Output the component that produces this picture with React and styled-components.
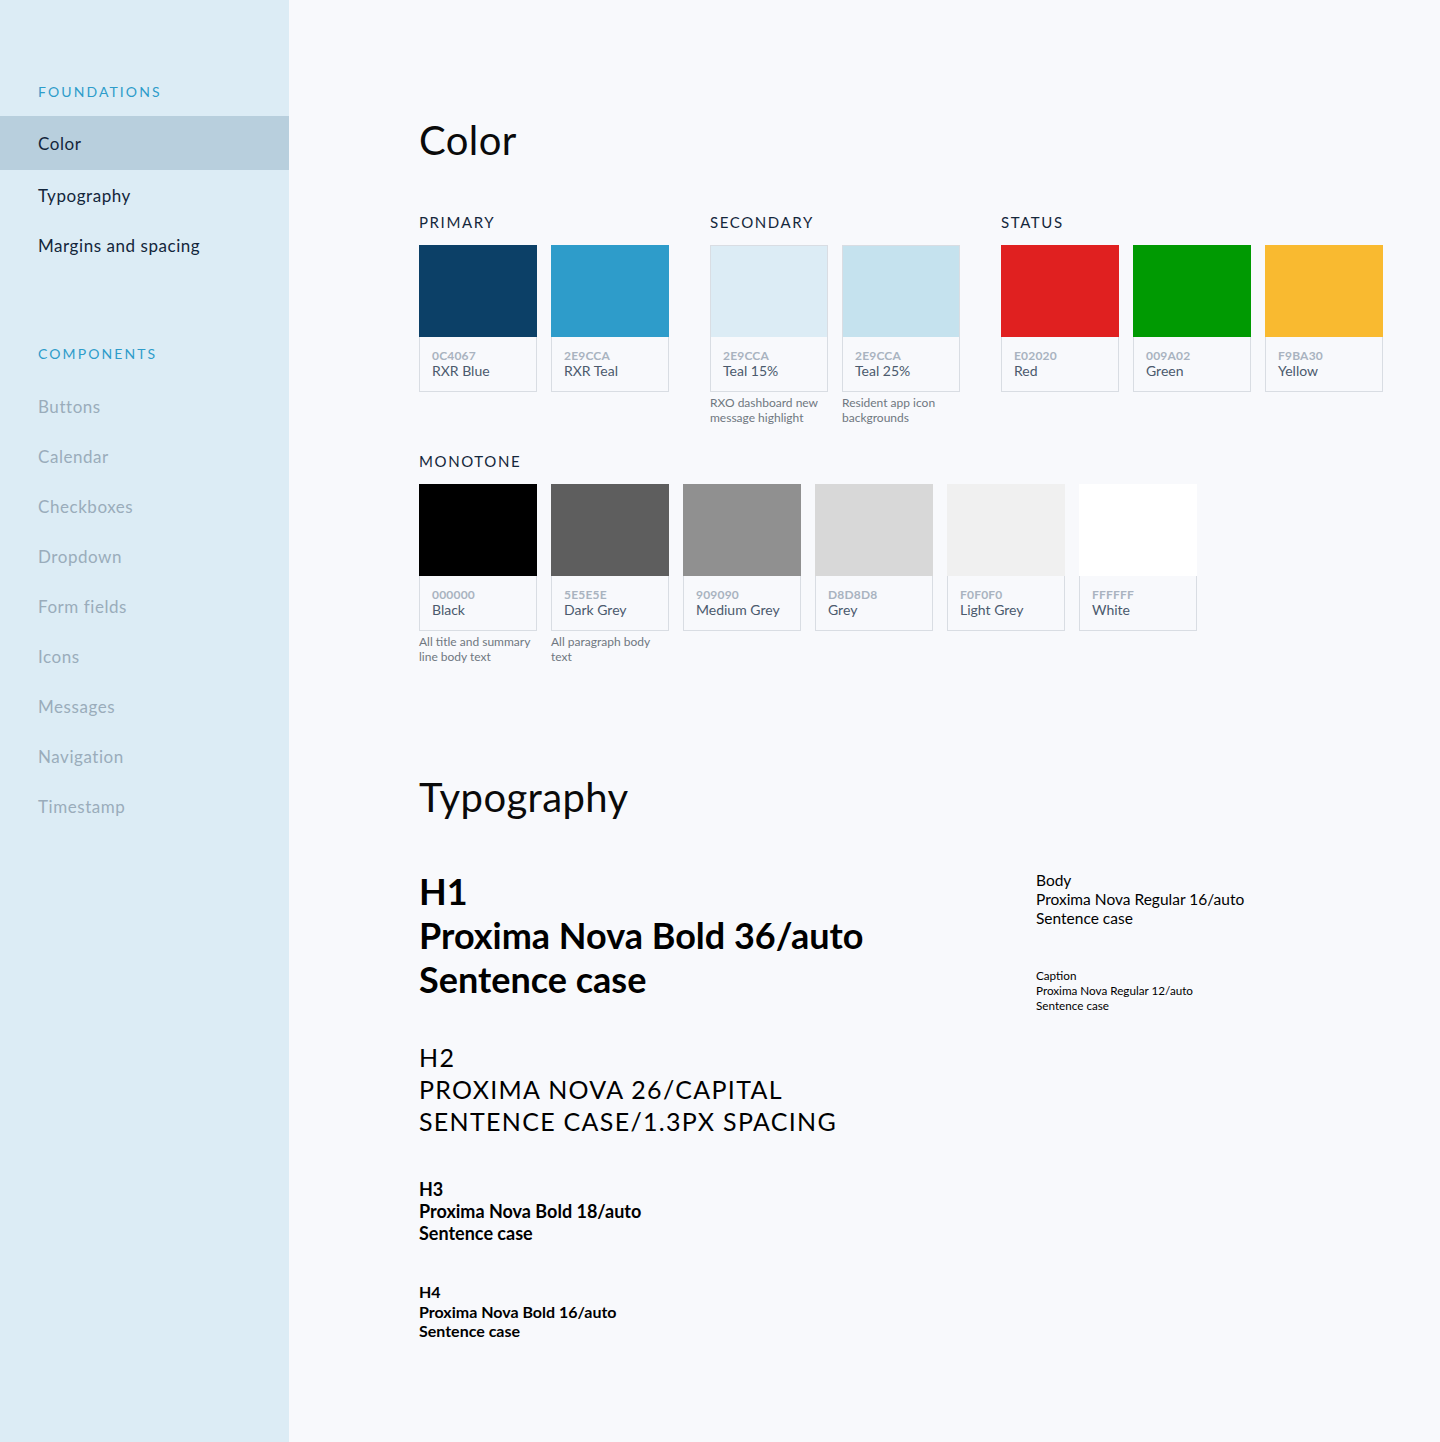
import React from "react";
import styled, { createGlobalStyle } from "styled-components";

const Global = createGlobalStyle`
  html, body { margin: 0; padding: 0; }
  body {
    background: #f8f9fc;
    font-family: Lato, "Open Sans", Arial, sans-serif;
    -webkit-font-smoothing: antialiased;
  }
  * { box-sizing: border-box; }
`;

const Layout = styled.div`
  display: flex;
  min-height: 1442px;
`;

const Sidebar = styled.nav`
  width: 289px;
  flex-shrink: 0;
  background: #dcecf5;
  padding-top: 83px;
`;

const NavLabel = styled.div`
  padding-left: 38px;
  font-size: 14px;
  line-height: 17px;
  letter-spacing: 2.1px;
  color: #2e9cca;
  text-transform: uppercase;
  margin-top: ${(p) => p.$mt || 0}px;
`;

const NavList = styled.ul`
  list-style: none;
  margin: ${(p) => p.$mt}px 0 0;
  padding: 0;
`;

const NavItem = styled.li`
  display: flex;
  align-items: center;
  height: ${(p) => (p.$active ? 54 : 50)}px;
  padding-left: 38px;
  font-size: 17px;
  letter-spacing: 0.55px;
  color: ${(p) => (p.$muted ? "#9aacbb" : "#13263b")};
  background: ${(p) => (p.$active ? "#b8cfdd" : "transparent")};
`;

const Main = styled.main`
  flex: 1;
  padding: 116px 0 80px 130px;
  color: #000;
`;

const PageTitle = styled.h1`
  margin: ${(p) => p.$mt || 0}px 0 0;
  font-size: 40px;
  line-height: 48px;
  font-weight: 400;
  letter-spacing: 0.4px;
  color: #0a0a0a;
`;

const GroupRow = styled.div`
  display: flex;
  gap: 41px;
  margin-top: ${(p) => p.$mt || 0}px;
`;

const Group = styled.section`
  display: flex;
  flex-direction: column;
`;

const GroupLabel = styled.h3`
  margin: 0 0 14px;
  font-size: 15px;
  line-height: 18px;
  font-weight: 400;
  letter-spacing: 1.6px;
  color: #14273b;
  text-transform: uppercase;
`;

const Swatches = styled.div`
  display: flex;
  gap: 14px;
`;

const SwatchCol = styled.div`
  width: 118px;
  display: flex;
  flex-direction: column;
`;

const Swatch = styled.div`
  border: 1px solid #d9dde3;
  display: flex;
  flex-direction: column;
`;

const Chip = styled.div`
  height: 92px;
  margin: -1px -1px 0;
  background: ${(p) => p.$color};
  border: ${(p) => (p.$light ? "1px solid #d9dde3" : "none")};
  border-bottom: none;
`;

const SwatchInfo = styled.div`
  padding: 12px 12px 12px;
`;

const Hex = styled.div`
  font-size: 12px;
  line-height: 14px;
  font-weight: 700;
  letter-spacing: 0.2px;
  color: #a9b3c0;
`;

const Name = styled.div`
  font-size: 14px;
  line-height: 16px;
  color: #4b5a6d;
`;

const Caption = styled.div`
  margin-top: 3px;
  font-size: 12px;
  line-height: 15px;
  color: #6f7780;
`;

const TypeGrid = styled.div`
  display: grid;
  grid-template-columns: 617px 1fr;
  margin-top: 48px;
`;

const Column = styled.div`
  display: flex;
  flex-direction: column;
  padding-top: ${(p) => p.$pt || 0}px;
`;

const Spec = styled.div`
  margin-top: ${(p) => p.$mt || 0}px;
  font-size: ${(p) => p.$size}px;
  line-height: ${(p) => p.$lh}px;
  font-weight: ${(p) => (p.$bold ? 700 : 400)};
  letter-spacing: ${(p) => p.$ls || 0}px;
  text-transform: ${(p) => (p.$upper ? "uppercase" : "none")};
  color: #000;
`;

const foundations = [
  { label: "Color", active: true },
  { label: "Typography" },
  { label: "Margins and spacing" },
];

const components = [
  "Buttons",
  "Calendar",
  "Checkboxes",
  "Dropdown",
  "Form fields",
  "Icons",
  "Messages",
  "Navigation",
  "Timestamp",
];

const colorGroups = [
  {
    label: "Primary",
    swatches: [
      { hex: "0C4067", name: "RXR Blue", color: "#0c4067" },
      { hex: "2E9CCA", name: "RXR Teal", color: "#2e9cca" },
    ],
  },
  {
    label: "Secondary",
    swatches: [
      {
        hex: "2E9CCA",
        name: "Teal 15%",
        color: "#dcecf5",
        light: true,
        caption: ["RXO dashboard new", "message highlight"],
      },
      {
        hex: "2E9CCA",
        name: "Teal 25%",
        color: "#c5e2ee",
        light: true,
        caption: ["Resident app icon", "backgrounds"],
      },
    ],
  },
  {
    label: "Status",
    swatches: [
      { hex: "E02020", name: "Red", color: "#e02020" },
      { hex: "009A02", name: "Green", color: "#009a02" },
      { hex: "F9BA30", name: "Yellow", color: "#f9ba30" },
    ],
  },
];

const monotone = [
  { hex: "000000", name: "Black", color: "#000000", caption: ["All title and summary", "line body text"] },
  { hex: "5E5E5E", name: "Dark Grey", color: "#5e5e5e", caption: ["All paragraph body", "text"] },
  { hex: "909090", name: "Medium Grey", color: "#909090" },
  { hex: "D8D8D8", name: "Grey", color: "#d8d8d8" },
  { hex: "F0F0F0", name: "Light Grey", color: "#f0f0f0" },
  { hex: "FFFFFF", name: "White", color: "#ffffff" },
];

function SwatchCard({ s }) {
  return (
    <SwatchCol>
      <Swatch>
        <Chip $color={s.color} $light={s.light} />
        <SwatchInfo>
          <Hex>{s.hex}</Hex>
          <Name>{s.name}</Name>
        </SwatchInfo>
      </Swatch>
      {s.caption && (
        <Caption>
          {s.caption[0]}
          <br />
          {s.caption[1]}
        </Caption>
      )}
    </SwatchCol>
  );
}

function Lines({ lines, ...props }) {
  return (
    <Spec {...props}>
      {lines.map((l, i) => (
        <div key={i}>{l}</div>
      ))}
    </Spec>
  );
}

export default function App() {
  return (
    <>
      <Global />
      <Layout>
        <Sidebar>
          <NavLabel>Foundations</NavLabel>
          <NavList $mt={16}>
            {foundations.map((f) => (
              <NavItem key={f.label} $active={f.active}>
                {f.label}
              </NavItem>
            ))}
          </NavList>
          <NavLabel $mt={75}>Components</NavLabel>
          <NavList $mt={19}>
            {components.map((c) => (
              <NavItem key={c} $muted>
                {c}
              </NavItem>
            ))}
          </NavList>
        </Sidebar>
        <Main>
          <PageTitle>Color</PageTitle>
          <GroupRow $mt={49}>
            {colorGroups.map((g) => (
              <Group key={g.label}>
                <GroupLabel>{g.label}</GroupLabel>
                <Swatches>
                  {g.swatches.map((s) => (
                    <SwatchCard key={s.name} s={s} />
                  ))}
                </Swatches>
              </Group>
            ))}
          </GroupRow>
          <GroupRow $mt={27}>
            <Group>
              <GroupLabel>Monotone</GroupLabel>
              <Swatches>
                {monotone.map((s) => (
                  <SwatchCard key={s.name} s={s} />
                ))}
              </Swatches>
            </Group>
          </GroupRow>

          <PageTitle $mt={109}>Typography</PageTitle>
          <TypeGrid>
            <Column>
              <Lines
                $size={36}
                $lh={44}
                $bold
                lines={["H1", "Proxima Nova Bold 36/auto", "Sentence case"]}
              />
              <Lines
                $mt={40}
                $size={25}
                $lh={32}
                $ls={1.3}
                $upper
                lines={["H2", "Proxima Nova 26/Capital", "Sentence case/1.3px spacing"]}
              />
              <Lines
                $mt={41}
                $size={18}
                $lh={22}
                $bold
                lines={["H3", "Proxima Nova Bold 18/auto", "Sentence case"]}
              />
              <Lines
                $mt={38}
                $size={16}
                $lh={19.5}
                $bold
                lines={["H4", "Proxima Nova Bold 16/auto", "Sentence case"]}
              />
            </Column>
            <Column $pt={2}>
              <Lines
                $size={15.5}
                $lh={19}
                lines={["Body", "Proxima Nova Regular 16/auto", "Sentence case"]}
              />
              <Lines
                $mt={40}
                $size={11.7}
                $lh={15}
                lines={["Caption", "Proxima Nova Regular 12/auto", "Sentence case"]}
              />
            </Column>
          </TypeGrid>
        </Main>
      </Layout>
    </>
  );
}
